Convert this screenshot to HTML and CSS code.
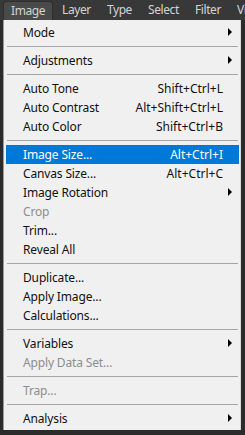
FILE: index.html
```html
<!DOCTYPE html>
<html lang="en">
<head>
    <meta charset="UTF-8" />
    <title>Image Menu</title>
    <link rel="stylesheet" href="styles.css">
</head>
<body>
    <div class="menubar">
        <span class="top_item active">Image</span>
        <span class="top_item">Layer</span>
        <span class="top_item">Type</span>
        <span class="top_item">Select</span>
        <span class="top_item">Filter</span>
        <span class="top_item">View</span>
    </div>

    <div class="menu">
        <div class="row sub">Mode</div>
        <div class="sep"></div>
        <div class="row sub">Adjustments</div>
        <div class="sep"></div>
        <div class="row"><span>Auto Tone</span><span class="key">Shift+Ctrl+L</span></div>
        <div class="row"><span>Auto Contrast</span><span class="key">Alt+Shift+Ctrl+L</span></div>
        <div class="row"><span>Auto Color</span><span class="key">Shift+Ctrl+B</span></div>
        <div class="sep"></div>
        <div class="row selected"><span>Image Size...</span><span class="key">Alt+Ctrl+I</span></div>
        <div class="row"><span>Canvas Size...</span><span class="key">Alt+Ctrl+C</span></div>
        <div class="row sub">Image Rotation</div>
        <div class="row disabled">Crop</div>
        <div class="row">Trim...</div>
        <div class="row">Reveal All</div>
        <div class="sep"></div>
        <div class="row">Duplicate...</div>
        <div class="row">Apply Image...</div>
        <div class="row">Calculations...</div>
        <div class="sep"></div>
        <div class="row sub">Variables</div>
        <div class="row disabled">Apply Data Set...</div>
        <div class="sep"></div>
        <div class="row disabled">Trap...</div>
        <div class="sep"></div>
        <div class="row sub">Analysis</div>
    </div>
</body>
</html>
```

FILE: styles.css
```css
* {
    margin: 0;
    padding: 0;
    box-sizing: border-box;
}

body {
    width: 245px;
    height: 435px;
    overflow: hidden;
    background: #2b2b2b;
    font-family: "Noto Sans", "Open Sans", sans-serif;
}

/* Top menu bar */
.menubar {
    display: flex;
    height: 20px;
    padding-left: 3px;
    background: #383838;
    white-space: nowrap;
    overflow: hidden;
}

.top_item {
    flex-shrink: 0;
    padding: 0 8px;
    line-height: 20px;
    font-size: 12px;
    letter-spacing: -0.4px;
    color: #d4d4d4;
}

.top_item.active {
    width: 50px;
    margin-top: 1px;
    margin-right: 1px;
    line-height: 18px;
    background: #4a4a4a;
    border: 1px solid #2e2e2e;
    border-bottom: none;
    border-radius: 3px 3px 0 0;
    padding-left: 7px;
}

/* Drop-down panel */
.menu {
    width: 238px;
    margin-left: 3px;
    padding: 3px 0 2px 0;
    background: #f0f0f0;
    border-left: 1px solid #9a9a9a;
    border-right: 1px solid #d8d8d8;
}

.row {
    display: flex;
    justify-content: space-between;
    align-items: center;
    height: 19px;
    margin: 0 1px 0 2px;
    padding: 0 16px 1px 17px;
    font-size: 12px;
    letter-spacing: -0.15px;
    color: #111;
    white-space: nowrap;
}

.row .key {
    letter-spacing: 0;
}

.row.selected {
    background: #0078d7;
    color: #fff;
}

.row.disabled {
    color: #8d8d8d;
}

/* Submenu arrow */
.row.sub::after {
    content: '';
    width: 0;
    height: 0;
    margin-right: -9px;
    border-top: 4px solid transparent;
    border-bottom: 4px solid transparent;
    border-left: 4px solid #000;
}

.sep {
    height: 9px;
    margin: 0 2px 0 3px;
    padding-top: 4px;
}

.sep::after {
    content: '';
    display: block;
    height: 1px;
    background: #a6a6a6;
}
```
